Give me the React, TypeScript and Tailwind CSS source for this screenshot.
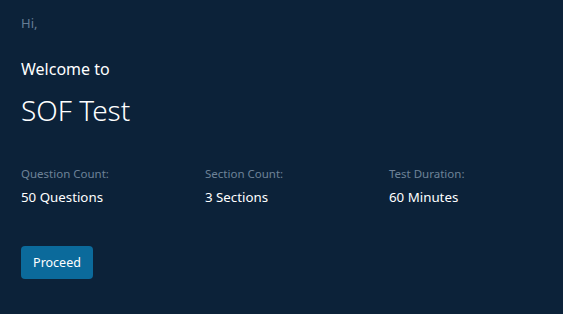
export default function App() {
  const stats = [
    { label: "Question Count:", value: "50 Questions" },
    { label: "Section Count:", value: "3 Sections" },
    { label: "Test Duration:", value: "60 Minutes" },
  ];

  return (
    <div
      className="min-h-[314px] w-full bg-[#0c2239] px-[21px] pt-[14px]"
      style={{ fontFamily: "'Noto Sans', 'Open Sans', sans-serif" }}
    >
      <p className="text-[13px] leading-[18px] text-[#667d95]">Hi,</p>
      <h2 className="mt-[26px] text-[16px] leading-[22px] text-white">Welcome to</h2>
      <h1 className="mt-[10px] text-[28px] font-light leading-[40px] text-white">SOF Test</h1>
      <div className="mt-[35px] grid grid-cols-[184px_184px_184px]">
        {stats.map((s) => (
          <div key={s.label} className="flex flex-col">
            <span className="text-[11.5px] leading-[17px] text-[#6e8298]">{s.label}</span>
            <span className="mt-[5px] text-[13.3px] leading-[20px] text-white">{s.value}</span>
          </div>
        ))}
      </div>
      <button className="mt-[39px] h-[33px] w-[72px] rounded-[4px] bg-[#0b6a9b] pt-[2px] text-[12.5px] text-white">
        Proceed
      </button>
    </div>
  );
}
